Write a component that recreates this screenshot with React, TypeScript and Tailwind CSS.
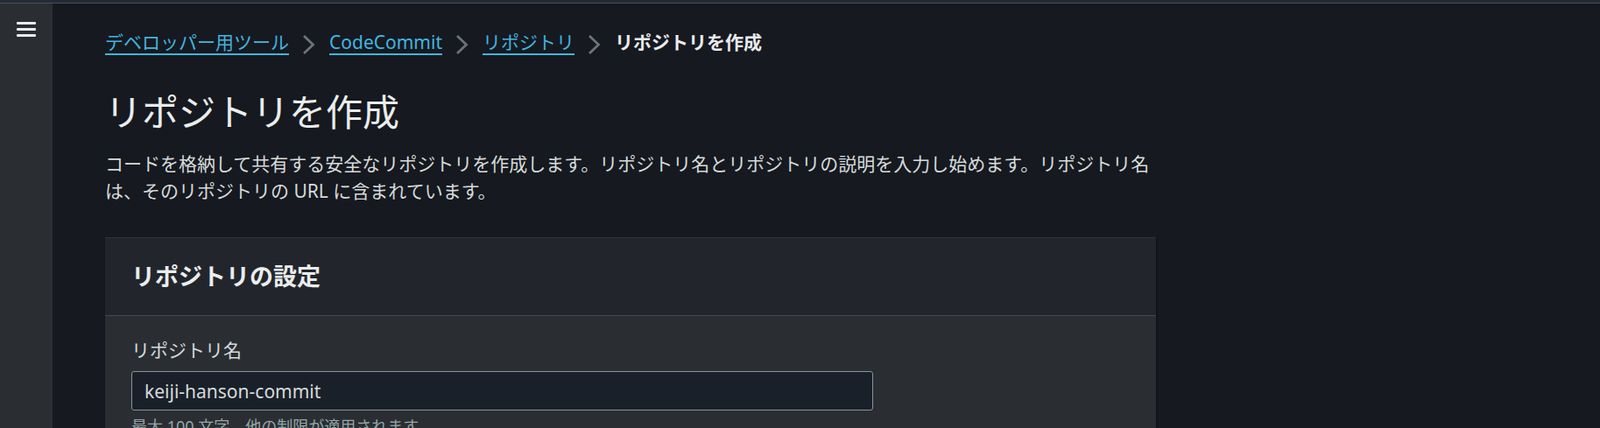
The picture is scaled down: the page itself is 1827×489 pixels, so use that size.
import React from 'react';

const font = { fontFamily: '"Noto Sans", "Noto Sans CJK JP", sans-serif' };

function Chevron() {
  return (
    <svg
      width="15"
      height="24"
      viewBox="0 0 15 24"
      className="ml-[15px] mr-[16px] mt-[6px] shrink-0"
      fill="none"
      stroke="#6c737b"
      strokeWidth="2.8"
    >
      <path d="M2 2 L12.5 12 L2 22" />
    </svg>
  );
}

function Crumb({ children }: { children: React.ReactNode }) {
  return (
    <a
      href="#"
      className="text-[#42b4e0] underline decoration-2 underline-offset-[5px]"
    >
      {children}
    </a>
  );
}

export default function App() {
  return (
    <div className="h-[489px] overflow-hidden bg-[#16191f] flex flex-col" style={font}>
      {/* top strip */}
      <div className="h-[3px] bg-[#232a34] shrink-0" />
      <div className="h-px bg-[#46505e] shrink-0" />

      <div className="flex flex-1">
        {/* side navigation toggle */}
        <aside className="w-[60px] shrink-0 bg-[#2a2e33] pt-[21px] pl-[19px]">
          <div className="flex flex-col gap-[4px] w-[22px]">
            <span className="block h-[3px] bg-[#e9ebed] rounded-[1px]" />
            <span className="block h-[3px] bg-[#e9ebed] rounded-[1px]" />
            <span className="block h-[3px] bg-[#e9ebed] rounded-[1px]" />
          </div>
        </aside>

        <main className="flex-1 pl-[60px] pt-[31px]">
          <div className="w-[1200px]">
            {/* Breadcrumbs */}
            <nav className="flex items-center text-[21px] leading-[26px] h-[26px]">
              <Crumb>デベロッパー用ツール</Crumb>
              <Chevron />
              <Crumb>CodeCommit</Crumb>
              <Chevron />
              <Crumb>リポジトリ</Crumb>
              <Chevron />
              <span className="font-bold text-[#e9ebed]">リポジトリを作成</span>
            </nav>

            {/* Header */}
            <h1 className="mt-[42px] text-[42px] leading-[50px] font-normal text-[#eaeded]">
              リポジトリを作成
            </h1>
            <p className="mt-[19px] text-[21px] leading-[31px] text-[#d5dbdb]">
              コードを格納して共有する安全なリポジトリを作成します。リポジトリ名とリポジトリの説明を入力し始めます。リポジトリ名は、そのリポジトリの URL に含まれています。
            </p>

            {/* Settings container */}
            <section className="mt-[37px] bg-[#2a2e33] shadow-[1px_1px_2px_rgba(0,0,0,0.4)]">
              <div className="bg-[#22262c] border-t border-[#2e333a] border-b border-b-[#414750] pl-[30px] pt-[27px] pb-[27px]">
                <h2 className="text-[27px] leading-[34px] font-bold text-[#eaeded]">
                  リポジトリの設定
                </h2>
              </div>
              <div className="pl-[30px] pt-[25px] pb-[24px]">
                <label className="block text-[21px] leading-[28px] text-[#d5dbdb]">
                  リポジトリ名
                </label>
                <input
                  type="text"
                  defaultValue="keiji-hanson-commit"
                  className="mt-[10px] block w-[847px] h-[45px] bg-[#1a2029] border border-[#879596] rounded-[3px] px-[14px] text-[21px] text-[#d5dbdb] outline-none"
                  style={font}
                />
                <div className="mt-[6px] text-[18px] leading-[24px] text-[#95a5a6]">
                  最大 100 文字。他の制限が適用されます。
                </div>
              </div>
            </section>
          </div>
        </main>
      </div>
    </div>
  );
}
